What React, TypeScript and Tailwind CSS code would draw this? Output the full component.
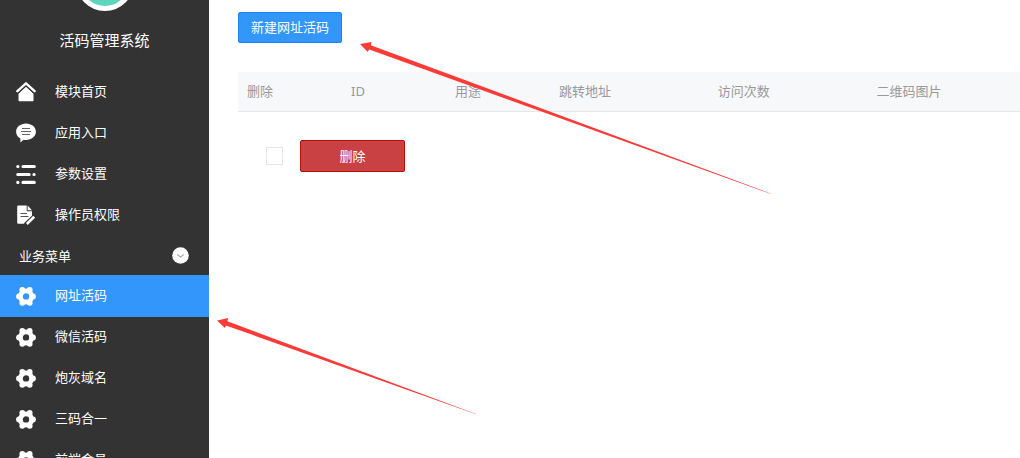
import React from "react";

function HomeIcon() {
  return (
    <svg viewBox="0 0 20 20" className="size-5" fill="currentColor" aria-hidden="true">
      <path d="M10 4.800 2.500 11.600V18.200c0 .6.400 1 1 1h13c.6 0 1-.4 1-1v-6.600z" />
      <path d="M1.400 9.200 10 1.300l8.600 7.900" fill="none" stroke="currentColor" strokeWidth="2.400" strokeLinecap="round" strokeLinejoin="round" />
      <path d="M2.200 11.200 10 4l7.800 7.200" fill="none" stroke="#333" strokeWidth="1" />
    </svg>
  );
}

function ChatIcon() {
  return (
    <svg viewBox="0 0 20 20" className="size-5" aria-hidden="true">
      <path fill="currentColor" d="M10 .5c5.500 0 9.900 3.600 9.900 8.200s-4.400 8.200-9.900 8.200c-.8 0-1.600-.1-2.300-.2L4.400 19.600v-4.100C1.800 14 .1 11.500.1 8.700.1 4.100 4.500.5 10 .5z" />
      <path stroke="#666" strokeWidth="1" d="M6 5.500h8M5 8.500h10M6 11.500h8" />
    </svg>
  );
}

function SlidersIcon() {
  return (
    <svg viewBox="0 0 20 20" className="size-5" fill="none" stroke="currentColor" strokeWidth="3.200" strokeLinecap="round" aria-hidden="true">
      <path d="M1.800 2.500h.1M7 2.500h11.300M1.800 10.500h11.300M18 10.500h.1M1.800 18.400h.1M7 18.400h11.300" />
    </svg>
  );
}

function DocIcon() {
  return (
    <svg viewBox="0 0 20 20" className="size-5" aria-hidden="true">
      <path fill="currentColor" d="M2.500.600H10.700v4.600c0 .6.400 1 1 1h4.300v5.600L9 18.700H2.500c-.8 0-1.300-.5-1.300-1.300V1.900C1.200 1.100 1.700.6 2.500.6z" />
      <path fill="currentColor" d="M11.600.600 16 5.200h-4.400z" />
      <path stroke="#555" strokeWidth="1.100" d="M4.500 8.500H11M4.500 11.500h8" />
      <path stroke="#333" strokeWidth="4.600" d="m9.500 20 9-8.700" />
      <path stroke="currentColor" strokeWidth="2.600" d="m10.800 19 7.400-7.200" />
    </svg>
  );
}

function GearIcon() {
  return (
    <svg viewBox="0 0 20 20" className="size-5" fill="currentColor" aria-hidden="true">
      <circle cx="10" cy="10.400" r="5.600" fill="none" stroke="currentColor" strokeWidth="4.800" />
      <circle cx="3" cy="10.400" r="2.900" />
      <circle cx="17" cy="10.400" r="2.900" />
      <circle cx="6.300" cy="4" r="2.900" />
      <circle cx="13.700" cy="4" r="2.900" />
      <circle cx="6.300" cy="16.800" r="2.900" />
      <circle cx="13.700" cy="16.800" r="2.900" />
    </svg>
  );
}

type MenuItem = { label: string; icon: () => React.JSX.Element; active?: boolean };

const systemMenu: MenuItem[] = [
  { label: "模块首页", icon: HomeIcon },
  { label: "应用入口", icon: ChatIcon },
  { label: "参数设置", icon: SlidersIcon },
  { label: "操作员权限", icon: DocIcon },
];

const businessMenu: MenuItem[] = [
  { label: "网址活码", icon: GearIcon, active: true },
  { label: "微信活码", icon: GearIcon },
  { label: "炮灰域名", icon: GearIcon },
  { label: "三码合一", icon: GearIcon },
  { label: "前端会员", icon: GearIcon },
];

function Menu({ items }: { items: MenuItem[] }) {
  return (
    <ul>
      {items.map(({ label, icon: Icon, active }) => (
        <li key={label} className="-mb-px">
          <a
            href="#"
            aria-current={active ? "page" : undefined}
            className={`flex h-[42px] items-center gap-[19px] pl-4 ${active ? "bg-[#3296fa]" : ""}`}
          >
            <Icon />
            <span className="pb-0.5">{label}</span>
          </a>
        </li>
      ))}
    </ul>
  );
}

const columns = [
  { title: "删除", width: "w-[13.3%]" },
  { title: "ID", width: "w-[13.3%]" },
  { title: "用途", width: "w-[13.3%]" },
  { title: "跳转地址", width: "w-[20.3%]" },
  { title: "访问次数", width: "w-[20.3%]" },
  { title: "二维码图片", width: "w-[19.5%]" },
];

export default function App() {
  return (
    <div className="relative flex h-screen overflow-hidden bg-white font-['Noto_Sans','Noto_Sans_CJK_SC',sans-serif] text-[13px] leading-5">
      <aside className="w-[209px] shrink-0 overflow-hidden bg-[#333] text-white">
        <div className="-mt-[47px] flex flex-col items-center">
          <div className="size-[58px] rounded-full border-5 border-white bg-[#5fd5c0]" />
          <h1 className="mt-[19px] text-[15px] leading-5">活码管理系统</h1>
        </div>
        <nav className="mt-[21px]">
          <Menu items={systemMenu} />
          <button type="button" className="flex h-10 w-full items-center justify-between pt-px pr-5 pl-[19px] text-left">
            <span>业务菜单</span>
            <svg viewBox="0 0 17 17" className="size-[17px]" aria-hidden="true">
              <circle cx="8.500" cy="8.500" r="8.300" fill="#fff" />
              <path d="m5.300 7.500 3.200 2.600 3.200-2.600" fill="none" stroke="#aaa" strokeWidth="1.200" />
            </svg>
          </button>
          <Menu items={businessMenu} />
        </nav>
      </aside>

      <main className="min-w-0 flex-1 pt-3 pl-[29px]">
        <button type="button" className="block rounded-xs border border-[#1c86f2] bg-[#3296fa] px-3 py-1 leading-[21px] text-white">
          新建网址活码
        </button>
        <table className="mt-[29px] w-full table-fixed border-collapse text-left text-[#999]">
          <thead>
            <tr className="h-[39px] border-b border-[#e7e7eb] bg-[#f6f8f9]">
              {columns.map((column) => (
                <th key={column.title} scope="col" className={`${column.width} pl-[9px] font-normal`}>
                  {column.title}
                </th>
              ))}
            </tr>
          </thead>
        </table>
        <div className="mt-7 flex items-center gap-[17px] pl-7">
          <input type="checkbox" aria-label="全选" className="h-[18px] w-[17px] appearance-none border border-[#e7e7eb] bg-white checked:bg-[#3296fa]" />
          <button type="button" className="h-8 w-[105px] rounded-xs border border-[#b20f0f] bg-[#c94143] text-white">
            删除
          </button>
        </div>
      </main>

      <svg viewBox="0 0 1020 458" width="1020" height="458" className="pointer-events-none absolute top-0 left-0 max-w-none" fill="#fc3a38" aria-hidden="true">
        <path d="M360 44 371.500 42 370.800 45.200 771 193.700V194.100L369.300 49.500 367.500 51.800z" />
        <path d="M217 320.500 228.300 318 227.300 321.200 476 413.900V414.300L225.900 325.400 225 328z" />
      </svg>
    </div>
  );
}
